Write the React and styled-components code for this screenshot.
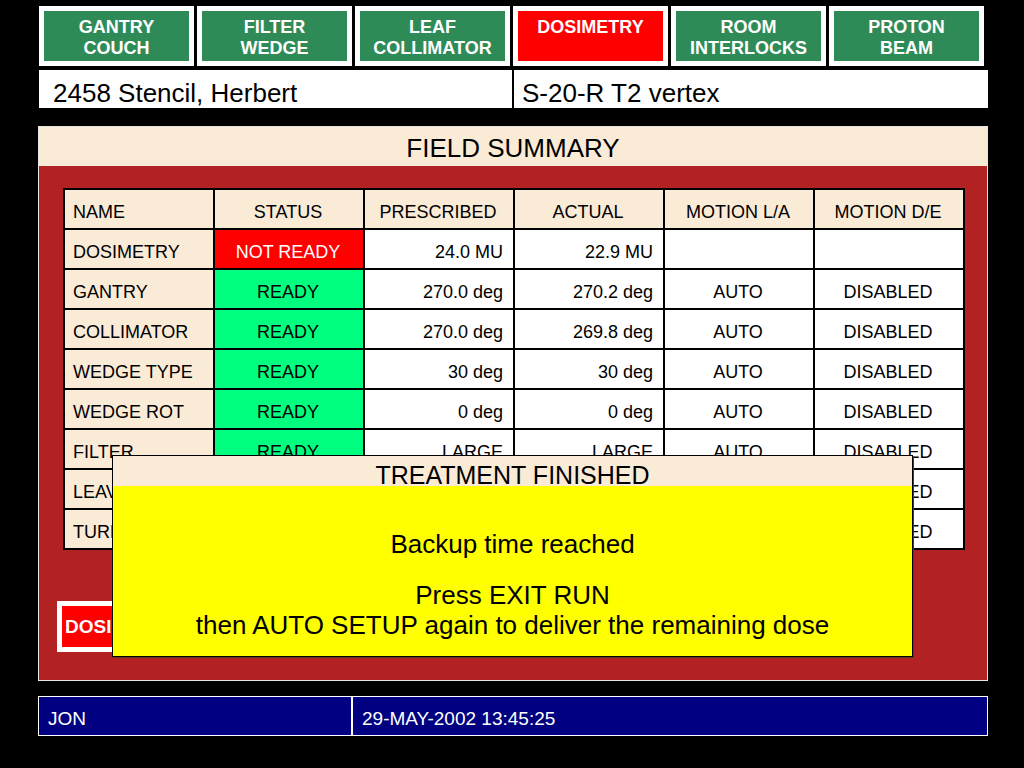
import React from 'react';
import styled, { createGlobalStyle } from 'styled-components';

const GlobalStyle = createGlobalStyle`
  html, body {
    margin: 0;
    padding: 0;
    background: #000;
  }
  body {
    font-family: 'Liberation Sans', Arial, Helvetica, sans-serif;
  }
`;

const BEIGE = '#faebd7';

const Screen = styled.div`
  position: relative;
  width: 1024px;
  height: 768px;
  box-sizing: border-box;
  padding: 6px 36px 0 38px;
  background: #000;
  color: #000;
  overflow: hidden;
`;

const TabBar = styled.div`
  display: grid;
  grid-template-columns: repeat(6, 155px);
  column-gap: 3px;
  margin-left: 1px;
  height: 60px;
`;

const Tab = styled.div`
  box-sizing: border-box;
  border: 5px solid #fff;
  background: ${(p) => (p.$active ? '#ff0000' : '#2e8b57')};
  color: #fff;
  font-weight: bold;
  font-size: 18px;
  line-height: 21px;
  text-align: center;
  padding-top: 6px;
`;

const PatientBar = styled.div`
  display: flex;
  margin: 4px 0 0 1px;
  height: 38px;
  background: #fff;
`;

const PatientCell = styled.div`
  box-sizing: border-box;
  width: ${(p) => (p.$divider ? 'auto' : '473px')};
  flex: ${(p) => (p.$divider ? 1 : 'none')};
  padding: 8px 0 0 14px;
  font-size: 26px;
  line-height: 30px;
  border-left: ${(p) => (p.$divider ? '2px solid #000' : 'none')};
  padding-left: ${(p) => (p.$divider ? '8px' : '14px')};
`;

const Panel = styled.div`
  margin-top: 18px;
  width: 950px;
  height: 555px;
  box-sizing: border-box;
  border: 1px solid #e6e6e6;
  background: #b22222;
  display: flex;
  flex-direction: column;
`;

const PanelHeader = styled.div`
  height: 39px;
  background: ${BEIGE};
  font-size: 26px;
  line-height: 42px;
  text-align: center;
`;

const PanelBody = styled.div`
  padding: 22px 0 0 24px;
`;

const Grid = styled.div`
  display: grid;
  grid-template-columns: repeat(6, 148px);
  grid-auto-rows: 38px;
  gap: 2px;
  padding: 2px;
  width: max-content;
  background: #000;
`;

const Cell = styled.div`
  box-sizing: border-box;
  background: ${(p) => p.$bg || '#fff'};
  color: ${(p) => p.$color || '#000'};
  font-size: 18px;
  line-height: 44px;
  text-align: ${(p) => p.$align || 'center'};
  padding: 0 10px 0 8px;
  white-space: nowrap;
  overflow: hidden;
`;

const DoseButton = styled.div`
  margin: 51px 0 0 -6px;
  width: 160px;
  height: 51px;
  box-sizing: border-box;
  border: 5px solid #fff;
  background: #ff0000;
  color: #fff;
  font-weight: bold;
  font-size: 19px;
  line-height: 42px;
  padding-left: 3px;
`;

const Footer = styled.div`
  display: flex;
  margin-top: 15px;
  width: 950px;
  height: 40px;
  box-sizing: border-box;
  border: 1px solid #fff;
  background: #000080;
  color: #fff;
  font-size: 19px;
  line-height: 44px;
`;

const FooterCell = styled.div`
  width: ${(p) => p.$width || 'auto'};
  flex: ${(p) => (p.$width ? 'none' : 1)};
  box-sizing: border-box;
  padding-left: 9px;
  border-left: ${(p) => (p.$divider ? '2px solid #fff' : 'none')};
`;

// modal message lying over the field summary
const Dialog = styled.div`
  position: absolute;
  left: 112px;
  top: 455px;
  width: 801px;
  height: 202px;
  box-sizing: border-box;
  border: 1px solid #000;
  box-shadow: 1px 1px 0 #5a3a10;
  background: #ffff00;
  display: flex;
  flex-direction: column;
`;

const DialogTitle = styled.div`
  height: 30px;
  background: ${BEIGE};
  font-size: 25px;
  line-height: 38px;
  text-align: center;
`;

const DialogBody = styled.div`
  padding-top: 43px;
  font-size: 26px;
  line-height: 30px;
  text-align: center;
`;

const Message = styled.div`
  margin-bottom: 21px;
`;

const TABS = [
  ['GANTRY', 'COUCH'],
  ['FILTER', 'WEDGE'],
  ['LEAF', 'COLLIMATOR'],
  ['DOSIMETRY'],
  ['ROOM', 'INTERLOCKS'],
  ['PROTON', 'BEAM'],
];

const HEAD = ['NAME', 'STATUS', 'PRESCRIBED', 'ACTUAL', 'MOTION L/A', 'MOTION D/E'];

const ROWS = [
  ['DOSIMETRY', 'NOT READY', '24.0 MU', '22.9 MU', '', ''],
  ['GANTRY', 'READY', '270.0 deg', '270.2 deg', 'AUTO', 'DISABLED'],
  ['COLLIMATOR', 'READY', '270.0 deg', '269.8 deg', 'AUTO', 'DISABLED'],
  ['WEDGE TYPE', 'READY', '30 deg', '30 deg', 'AUTO', 'DISABLED'],
  ['WEDGE ROT', 'READY', '0 deg', '0 deg', 'AUTO', 'DISABLED'],
  ['FILTER', 'READY', 'LARGE', 'LARGE', 'AUTO', 'DISABLED'],
  ['LEAVES', 'READY', '12', '12', 'AUTO', 'DISABLED'],
  ['TURNTABLE', 'READY', '0.0 deg', '0.0 deg', 'AUTO', 'DISABLED'],
];

const statusColors = (s) =>
  s === 'READY' ? { bg: '#00ff7f', color: '#000' } : { bg: '#ff0000', color: '#fff' };

const Row = ({ row }) => {
  const [name, status, pres, act, la, de] = row;
  const st = statusColors(status);
  return (
    <>
      <Cell $bg={BEIGE} $align="left">{name}</Cell>
      <Cell $bg={st.bg} $color={st.color}>{status}</Cell>
      <Cell $align="right">{pres}</Cell>
      <Cell $align="right">{act}</Cell>
      <Cell>{la}</Cell>
      <Cell>{de}</Cell>
    </>
  );
};

const App = () => {
  return (
    <Screen>
      <GlobalStyle />
      <TabBar>
        {TABS.map((t) => (
          <Tab key={t[0]} $active={t[0] === 'DOSIMETRY'}>
            {t.map((line) => (
              <div key={line}>{line}</div>
            ))}
          </Tab>
        ))}
      </TabBar>
      <PatientBar>
        <PatientCell>2458 Stencil, Herbert</PatientCell>
        <PatientCell $divider>S-20-R T2 vertex</PatientCell>
      </PatientBar>
      <Panel>
        <PanelHeader>FIELD SUMMARY</PanelHeader>
        <PanelBody>
          <Grid>
            {HEAD.map((h, i) => (
              <Cell key={h} $bg={BEIGE} $align={i === 0 ? 'left' : 'center'}>
                {h}
              </Cell>
            ))}
            {ROWS.map((r) => (
              <Row key={r[0]} row={r} />
            ))}
          </Grid>
          <DoseButton>DOSIMETRY</DoseButton>
        </PanelBody>
      </Panel>
      <Footer>
        <FooterCell $width="312px">JON</FooterCell>
        <FooterCell $divider>29-MAY-2002 13:45:25</FooterCell>
      </Footer>
      <Dialog>
        <DialogTitle>TREATMENT FINISHED</DialogTitle>
        <DialogBody>
          <Message>Backup time reached</Message>
          <div>Press EXIT RUN</div>
          <div>then AUTO SETUP again to deliver the remaining dose</div>
        </DialogBody>
      </Dialog>
    </Screen>
  );
};

export default App;
